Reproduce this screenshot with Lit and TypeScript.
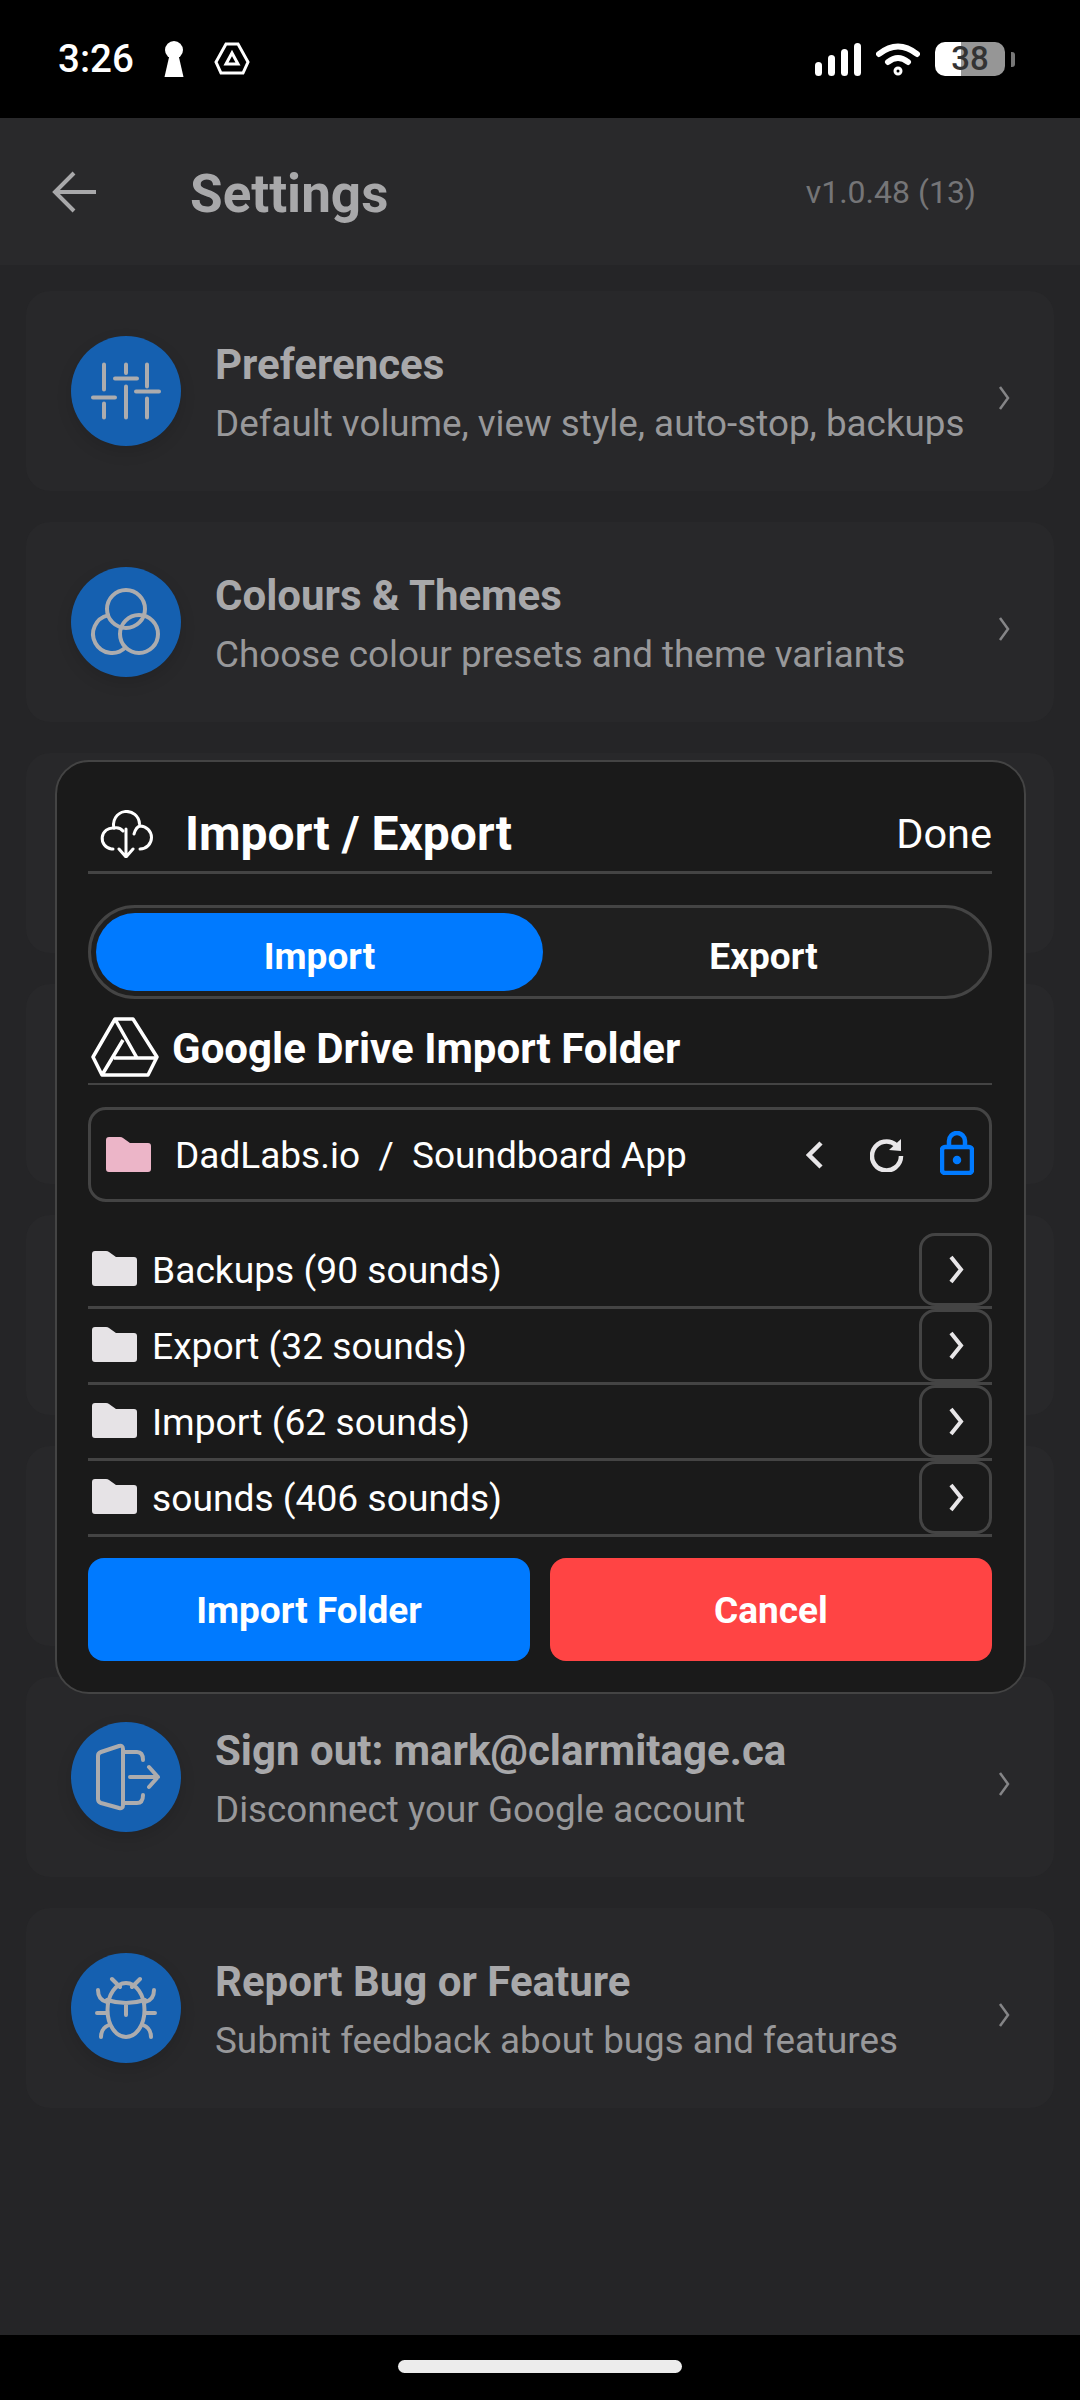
import { LitElement, css, html, svg } from 'lit';
import { customElement } from 'lit/decorators.js';

const ICONS = {
  sliders: svg`<path d="M17 9.500v25M17 48.500v14M6 42.500h22M39 9.500V18M39 31.500v31M28 23.500h22M60 9.500v22M60 43.500v19M49 36.500h23"/>`,
  circles: svg`<circle cx="39" cy="23" r="19"/><path d="M21.100 29.400A19 19 0 1 0 38.500 61.400"/><circle cx="52" cy="48" r="19"/>`,
  signout: svg`<path d="M14 11l18-6q4-1 4 3v56q0 4-4 3l-18-5q-3-1-3-4V15q0-3 3-4zM36 11h14q6 0 6 8M36 62h14q6 0 6-8M43 36h28M62 26l9 10-9 10"/>`,
  bug: svg`<ellipse cx="39" cy="38" rx="18.500" ry="27"/><path d="M20 28q19 6 38 0M39 31v12M25 7l8 8M53 7l-8 8M11 18q0 10 9 12M67 18q0 10-9 12M10 41h9M59 41h9M14 65q0-9 8-12M64 65q0-9-8-12"/>`,
};

const CARDS = [
  { icon: ICONS.sliders, title: 'Preferences', sub: 'Default volume, view style, auto-stop, backups' },
  { icon: ICONS.circles, title: 'Colours & Themes', sub: 'Choose colour presets and theme variants' },
  {}, {}, {}, {},
  { icon: ICONS.signout, title: 'Sign out: mark@clarmitage.ca', sub: 'Disconnect your Google account' },
  { icon: ICONS.bug, title: 'Report Bug or Feature', sub: 'Submit feedback about bugs and features' },
];

const FOLDERS = ['Backups (90 sounds)', 'Export (32 sounds)', 'Import (62 sounds)', 'sounds (406 sounds)'];

const folder = (cls: string) => html`<svg class=${cls} viewBox="0 0 45 35"><path d="M0 3q0-3 3-3h11q2 0 3 1l7 5h18q3 0 3 3v23q0 3-3 3H3q-3 0-3-3z"/></svg>`;

@customElement('app-root')
export class AppRoot extends LitElement {
  static styles = css`
    :host {
      display: flex;
      flex-direction: column;
      position: relative;
      width: 1080px;
      height: 2400px;
      background: #000;
      font-family: Roboto, 'Liberation Sans', sans-serif;
      overflow: hidden;
    }
    svg { display: block; flex: none; }

    .status {
      height: 118px;
      display: flex;
      align-items: center;
      padding: 0 65px 0 58px;
      box-sizing: border-box;
      color: #fff;
    }
    .time { font-size: 38.500px; font-weight: 500; width: 106px; }
    .status-left { display: flex; align-items: center; flex: 1; margin-top: -1px; }
    .key { width: 20px; height: 36px; fill: #fff; margin-right: 30px; }
    .tri { width: 36px; height: 33px; fill: none; stroke: #fff; stroke-width: 3; }
    .signal { width: 47px; height: 33px; fill: #fff; margin-right: 14px; }
    .wifi { width: 44px; height: 33px; fill: none; stroke: #fff; stroke-width: 6; stroke-linecap: round; margin-right: 15px; }
    .batt {
      width: 70px;
      height: 34px;
      border-radius: 10px;
      background: linear-gradient(90deg, #fff 0 26px, #969696 26px);
      color: #333;
      font-size: 33px;
      font-weight: 500;
      line-height: 34px;
      text-align: center;
    }
    .nub { width: 4px; height: 15px; background: #777; border-radius: 0 3px 3px 0; margin-left: 6px; }
    .status-right { display: flex; align-items: center; margin-top: 0; }

    .bar {
      height: 147px;
      display: flex;
      align-items: center;
      background: #29292b;
      padding: 0 104px 0 52px;
      box-sizing: border-box;
    }
    .back { width: 44px; height: 42px; fill: none; stroke: #a8a8aa; stroke-width: 4; margin: 0 94px 0 0; }
    .bar h1 { flex: 1; margin: 0; padding-top: 5px; font-size: 53px; font-weight: 700; color: #a8a8aa; }
    .ver { font-size: 32px; color: #757577; }

    main {
      flex: 1;
      background: #252527;
      padding: 26px 26px 0;
      display: flex;
      flex-direction: column;
      gap: 31px;
    }
    .card {
      height: 200px;
      flex: none;
      box-sizing: border-box;
      background: #28282a;
      border-radius: 24px;
      display: flex;
      align-items: center;
      padding: 0 44px 0 45px;
    }
    .circle {
      width: 110px;
      height: 110px;
      flex: none;
      border-radius: 50%;
      background: #1560b0;
      display: flex;
      align-items: center;
      justify-content: center;
      margin: -1px 34px 0 0;
      box-shadow: 0 6px 16px rgba(0, 0, 0, 0.12);
    }
    .circle svg { width: 78px; height: 72px; fill: none; stroke: #acacae; stroke-width: 4; stroke-linecap: round; stroke-linejoin: round; }
    .text { flex: 1; padding-top: 2px; }
    .title { font-size: 42px; font-weight: 700; color: #a8a8aa; line-height: 50px; }
    .sub { font-size: 36.800px; color: #98989a; line-height: 42px; margin-top: 13px; white-space: nowrap; }
    .go { width: 12px; height: 24px; fill: none; stroke: #858587; stroke-width: 2.500; margin-top: 14px; }

    .nav { height: 65px; display: flex; align-items: center; justify-content: center; }
    .pill { width: 284px; height: 13px; border-radius: 7px; background: #ececec; margin-top: -3px; }

    .modal {
      position: absolute;
      left: 55px;
      top: 760px;
      width: 971px;
      height: 934px;
      box-sizing: border-box;
      border: 2px solid #444;
      border-radius: 34px;
      background: #1a1a1a;
      padding: 0 32px 0 31px;
      color: #fff;
    }
    .head { height: 112px; display: flex; align-items: center; border-bottom: 3px solid #444; padding-top: 34px; box-sizing: border-box; }
    .cloud { width: 54px; height: 48px; fill: none; stroke: #fff; stroke-width: 3; stroke-linecap: round; stroke-linejoin: round; margin: 0 31px 0 12px; }
    .head h2 { flex: 1; margin: 0; font-size: 48px; font-weight: 700; }
    .done { font-size: 41.500px; }

    .toggle {
      height: 94px;
      margin-top: 31px;
      box-sizing: border-box;
      border: 3px solid #444;
      border-radius: 47px;
      padding: 5px;
      display: flex;
      background: #1f1f1f;
    }
    .toggle div { flex: 1; display: flex; align-items: center; justify-content: center; border-radius: 40px; font-size: 37px; font-weight: 700; padding-top: 9px; }
    .toggle .on { flex: 0 0 447px; background: #007aff; }

    .drive { height: 86px; display: flex; align-items: center; border-bottom: 2px solid #444; box-sizing: border-box; padding-top: 15px; }
    .drive svg { width: 68px; height: 60px; fill: none; stroke: #fff; stroke-width: 3.500; stroke-linejoin: round; margin: -4px 13px 0 3px; }
    .drive h3 { margin: 0; font-size: 42px; font-weight: 700; }

    .path {
      height: 95px;
      margin-top: 22px;
      box-sizing: border-box;
      border: 3px solid #444;
      border-radius: 18px;
      display: flex;
      align-items: center;
      padding: 0 15px 0 15px;
      font-size: 37px;
    }
    .f-pink { width: 45px; height: 35px; fill: #ecb5c8; margin-right: 24px; }
    .crumb { flex: 1; white-space: pre; padding-top: 2px; }
    .back-c { width: 18px; height: 28px; fill: none; stroke: #e8e6e8; stroke-width: 4.500; margin-right: 46px; }
    .refresh { width: 34px; height: 34px; fill: none; stroke: #e8e6e8; stroke-width: 4.500; margin-right: 36px; }
    .lock { width: 34px; height: 44px; fill: none; stroke: #007aff; stroke-width: 4.500; margin-top: -4px; }

    .list { margin-top: 31px; }
    .row {
      height: 76px;
      box-sizing: border-box;
      border-bottom: 3px solid #444;
      display: flex;
      align-items: center;
      padding-left: 4px;
      font-size: 37.200px;
    }
    .f-grey { width: 45px; height: 35px; fill: #e6e3e6; margin: -3px 15px 0 0; }
    .name { flex: 1; padding-top: 1px; }
    .open {
      width: 73px;
      height: 73px;
      flex: none;
      box-sizing: border-box;
      border: 3px solid #444;
      border-radius: 16px;
      display: flex;
      align-items: center;
      justify-content: center;
    }
    .open svg { width: 16px; height: 29px; fill: none; stroke: #e8e6e8; stroke-width: 4; }

    .actions { display: flex; gap: 20px; margin-top: 21px; }
    .actions div {
      flex: 1;
      height: 103px;
      border-radius: 16px;
      display: flex;
      align-items: center;
      justify-content: center;
      font-size: 37px;
      font-weight: 700;
      padding-top: 2px;
      box-sizing: border-box;
    }
    .primary { background: #007aff; }
    .danger { background: #ff4444; }
  `;

  render() {
    return html`
      <div class="status">
        <div class="status-left">
          <span class="time">3:26</span>
          <svg class="key" viewBox="0 0 20 36"><circle cx="10" cy="9" r="9"/><path d="M6 12h8l5.500 24H.5z"/></svg>
          <svg class="tri" viewBox="0 0 36 33"><path d="M12 2h12l10 18-5 11H7L2 20z"/><path d="M18 11l6 11H12z"/></svg>
        </div>
        <div class="status-right">
          <svg class="signal" viewBox="0 0 47 33">
            <rect x="0" y="19" width="7" height="14" rx="3.500"/><rect x="13" y="12" width="7" height="21" rx="3.500"/>
            <rect x="26" y="6" width="7" height="27" rx="3.500"/><rect x="39" y="0" width="7" height="33" rx="3.500"/>
          </svg>
          <svg class="wifi" viewBox="0 0 44 33">
            <path d="M3 11q19-15 38 0"/><path d="M12 19q10-8 20 0"/><circle cx="22" cy="28" r="1.500"/>
          </svg>
          <div class="batt">38</div>
          <div class="nub"></div>
        </div>
      </div>

      <div class="bar">
        <svg class="back" viewBox="0 0 44 42"><path d="M22 2L3 21l19 19M3 21h41"/></svg>
        <h1>Settings</h1>
        <span class="ver">v1.0.48 (13)</span>
      </div>

      <main>
        ${CARDS.map((c) => html`
          <div class="card">
            ${c.title ? html`
              <div class="circle"><svg viewBox="0 0 78 72">${c.icon}</svg></div>
              <div class="text">
                <div class="title">${c.title}</div>
                <div class="sub">${c.sub}</div>
              </div>
              <svg class="go" viewBox="0 0 12 24"><path d="M2 1l8 11-8 11"/></svg>
            ` : ''}
          </div>
        `)}
      </main>

      <div class="nav"><div class="pill"></div></div>

      <div class="modal">
        <div class="head">
          <svg class="cloud" viewBox="0 0 54 48">
            <path d="M13 39H11.500A10.500 10.500 0 1 1 14 18q6-1 9 3"/>
            <path d="M14 18A13 13 0 1 1 39.500 14"/>
            <path d="M34 24q2-7 6-8A11.500 11.500 0 0 1 40 39"/>
            <path d="M26 19V47M19 39l7 8 7-8"/>
          </svg>
          <h2>Import / Export</h2>
          <span class="done">Done</span>
        </div>

        <div class="toggle">
          <div class="on">Import</div>
          <div>Export</div>
        </div>

        <div class="drive">
          <svg viewBox="0 0 68 60">
            <path d="M24 2h18l24 38-9 18H11L2 40zM24 2l22 39M32 23L11 58M23 41H66"/>
          </svg>
          <h3>Google Drive Import Folder</h3>
        </div>

        <div class="path">
          ${folder('f-pink')}
          <span class="crumb">DadLabs.io  /  Soundboard App</span>
          <svg class="back-c" viewBox="0 0 18 28"><path d="M15 2L3 14l12 12"/></svg>
          <svg class="refresh" viewBox="0 0 34 34"><path d="M26 7A14.500 14.500 0 1 0 31 18"/><path d="M19 12L31 1v12z" fill="#e8e6e8" stroke="none"/></svg>
          <svg class="lock" viewBox="0 0 34 44"><path d="M9 14V10a8 8 0 0 1 16 0v4"/><rect x="2" y="16" width="30" height="26" rx="3"/><circle cx="17" cy="29" r="2" fill="#007aff"/></svg>
        </div>

        <div class="list">
          ${FOLDERS.map((name) => html`
            <div class="row">
              ${folder('f-grey')}
              <span class="name">${name}</span>
              <div class="open"><svg viewBox="0 0 16 29"><path d="M3 2l10 12.500L3 27"/></svg></div>
            </div>
          `)}
        </div>

        <div class="actions">
          <div class="primary">Import Folder</div>
          <div class="danger">Cancel</div>
        </div>
      </div>
    `;
  }
}
